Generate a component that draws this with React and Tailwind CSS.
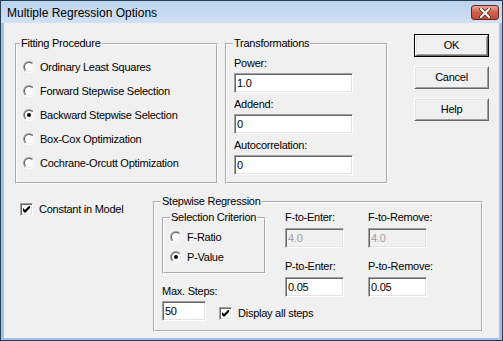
import React from "react";

function Radio({ checked }) {
  return (
    <svg width="12" height="12" viewBox="0 0 12 12" className="shrink-0">
      <defs>
        <linearGradient id="ro" x1="0" y1="0" x2="1" y2="1">
          <stop offset="0.5" stopColor="#a0a0a0" />
          <stop offset="0.5" stopColor="#ffffff" />
        </linearGradient>
        <linearGradient id="ri" x1="0" y1="0" x2="1" y2="1">
          <stop offset="0.5" stopColor="#696969" />
          <stop offset="0.5" stopColor="#e3e3e3" />
        </linearGradient>
      </defs>
      <circle cx="6" cy="6" r="6" fill="url(#ro)" />
      <circle cx="6" cy="6" r="5" fill="url(#ri)" />
      <circle cx="6" cy="6" r="4" fill="#ffffff" />
      {checked && <circle cx="6" cy="6" r="2" fill="#000000" />}
    </svg>
  );
}

function Check({ checked }) {
  return (
    <span className="w-[13px] h-[13px] shrink-0 bg-white border border-t-[#a0a0a0] border-l-[#a0a0a0] border-b-white border-r-white shadow-[inset_1px_1px_0_#696969,inset_-1px_-1px_0_#e3e3e3] flex items-center justify-center">
      {checked && (
        <svg width="7" height="7" viewBox="0 0 7 7">
          <path d="M0 2 L2 4 L7 -1 L7 2 L2 7 L0 5 Z" fill="#000000" />
        </svg>
      )}
    </span>
  );
}

function Field({ value, w, disabled }) {
  return (
    <div
      className={
        "h-[20px] shrink-0 border border-t-[#a0a0a0] border-l-[#a0a0a0] border-b-white border-r-white shadow-[inset_1px_1px_0_#696969,inset_-1px_-1px_0_#e3e3e3] pl-[2px] flex items-center " +
        w +
        (disabled ? " bg-[#f0f0f0] text-[#a0a0a0]" : " bg-white")
      }
    >
      {value}
    </div>
  );
}

function Btn({ children, def }) {
  if (def) {
    return (
      <div className="w-[75px] h-[23px] border border-black">
        <div className="w-full h-full border border-t-white border-l-white border-b-[#696969] border-r-[#696969] shadow-[inset_1px_1px_0_#e3e3e3,inset_-1px_-1px_0_#a0a0a0] flex items-center justify-center">
          {children}
        </div>
      </div>
    );
  }
  return (
    <div className="w-[75px] h-[23px] border border-t-white border-l-white border-b-[#696969] border-r-[#696969] shadow-[inset_1px_1px_0_#e3e3e3,inset_-1px_-1px_0_#a0a0a0] flex items-center justify-center">
      {children}
    </div>
  );
}

function RadioRow({ label, checked, h }) {
  return (
    <div className={"flex items-center gap-[5px] whitespace-nowrap " + h}>
      <Radio checked={checked} />
      <span>{label}</span>
    </div>
  );
}

export default function App() {
  return (
    <div className="w-[503px] h-[341px] flex flex-col border border-[#283c54] bg-[#9fc2ea] font-['Liberation_Sans',Arial,sans-serif] text-[11px] leading-[13px] tracking-[-0.25px] text-black">
      <div className="h-[22px] shrink-0 flex items-start justify-between pl-[6px] pr-[3px] bg-gradient-to-b from-[#bcd2ee] to-[#d2e1f4]">
        <span className="text-[12px] leading-[14px] tracking-normal mt-[5px] text-black">
          Multiple Regression Options
        </span>
        <div className="mt-[4px] w-[28px] h-[15px] rounded-[3px] border border-[#5c2a22] bg-gradient-to-b from-[#e8a597] via-[#cf5f4a] to-[#c44c36] flex items-center justify-center">
          <svg width="12" height="10" viewBox="0 0 12 10">
            <path d="M2 1 L10 9 M10 1 L2 9" stroke="#5a2a22" strokeWidth="3.6" strokeLinecap="square" />
            <path d="M2 1 L10 9 M10 1 L2 9" stroke="#ffffff" strokeWidth="2" strokeLinecap="square" />
          </svg>
        </div>
      </div>
      <div className="flex-1 ml-[3px] mr-[3px] mb-[2px] bg-[#f0f0f0] pl-[11px] pt-[11px]">
        <div className="flex items-start">
          <fieldset className="mt-[3px] w-[203px] h-[147px] border-2 [border-style:groove] border-white">
            <legend className="ml-[3px] px-[1px]">Fitting Procedure</legend>
            <div className="pt-[5px] pl-[6px] flex flex-col">
              <RadioRow h="h-[24px]" label="Ordinary Least Squares" />
              <RadioRow h="h-[24px]" label="Forward Stepwise Selection" />
              <RadioRow h="h-[24px]" label="Backward Stepwise Selection" checked />
              <RadioRow h="h-[24px]" label="Box-Cox Optimization" />
              <RadioRow h="h-[24px]" label="Cochrane-Orcutt Optimization" />
            </div>
          </fieldset>
          <fieldset className="ml-[7px] mt-[3px] w-[163px] h-[147px] border-2 [border-style:groove] border-white">
            <legend className="ml-[6px] px-[1px]">Transformations</legend>
            <div className="pt-[7px] pl-[7px] flex flex-col">
              <span className="mb-[3px]">Power:</span>
              <Field w="w-[119px]" value="1.0" />
              <span className="mt-[5px] mb-[3px]">Addend:</span>
              <Field w="w-[119px]" value="0" />
              <span className="mt-[5px] mb-[3px]">Autocorrelation:</span>
              <Field w="w-[119px]" value="0" />
            </div>
          </fieldset>
          <div className="ml-[26px] flex flex-col gap-[9px]">
            <Btn def>OK</Btn>
            <Btn>Cancel</Btn>
            <Btn>Help</Btn>
          </div>
        </div>
        <div className="flex items-start mt-[11px]">
          <div className="w-[138px] shrink-0 pl-[5px] pt-[8px] flex items-center gap-[6px] whitespace-nowrap">
            <Check checked />
            <span>Constant in Model</span>
          </div>
          <fieldset className="w-[330px] h-[137px] shrink-0 border-2 [border-style:groove] border-white">
            <legend className="ml-[6px] px-[1px]">Stepwise Regression</legend>
            <div className="flex items-start pl-[7px] pt-[3px]">
              <div className="w-[104px] shrink-0 flex flex-col">
                <fieldset className="w-[104px] h-[63px] border-2 [border-style:groove] border-white">
                  <legend className="ml-[6px] px-[1px]">Selection Criterion</legend>
                  <div className="pt-[3px] pl-[6px] flex flex-col">
                    <RadioRow h="h-[20px]" label="F-Ratio" />
                    <RadioRow h="h-[20px]" label="P-Value" checked />
                  </div>
                </fieldset>
                <span className="mt-[11px] mb-[3px] whitespace-nowrap">Max. Steps:</span>
                <div className="flex items-end whitespace-nowrap">
                  <Field w="w-[44px]" value="50" />
                  <div className="ml-[13px] mb-[1px] shrink-0 flex items-center gap-[6px]">
                    <Check checked />
                    <span>Display all steps</span>
                  </div>
                </div>
              </div>
              <div className="ml-[19px] grid grid-cols-[59px_59px] gap-x-[24px] whitespace-nowrap">
                <span className="mb-[4px]">F-to-Enter:</span>
                <span className="mb-[4px]">F-to-Remove:</span>
                <Field w="w-[59px]" value="4.0" disabled />
                <Field w="w-[59px]" value="4.0" disabled />
                <span className="mt-[12px] mb-[4px]">P-to-Enter:</span>
                <span className="mt-[12px] mb-[4px]">P-to-Remove:</span>
                <Field w="w-[59px]" value="0.05" />
                <Field w="w-[59px]" value="0.05" />
              </div>
            </div>
          </fieldset>
        </div>
      </div>
    </div>
  );
}
